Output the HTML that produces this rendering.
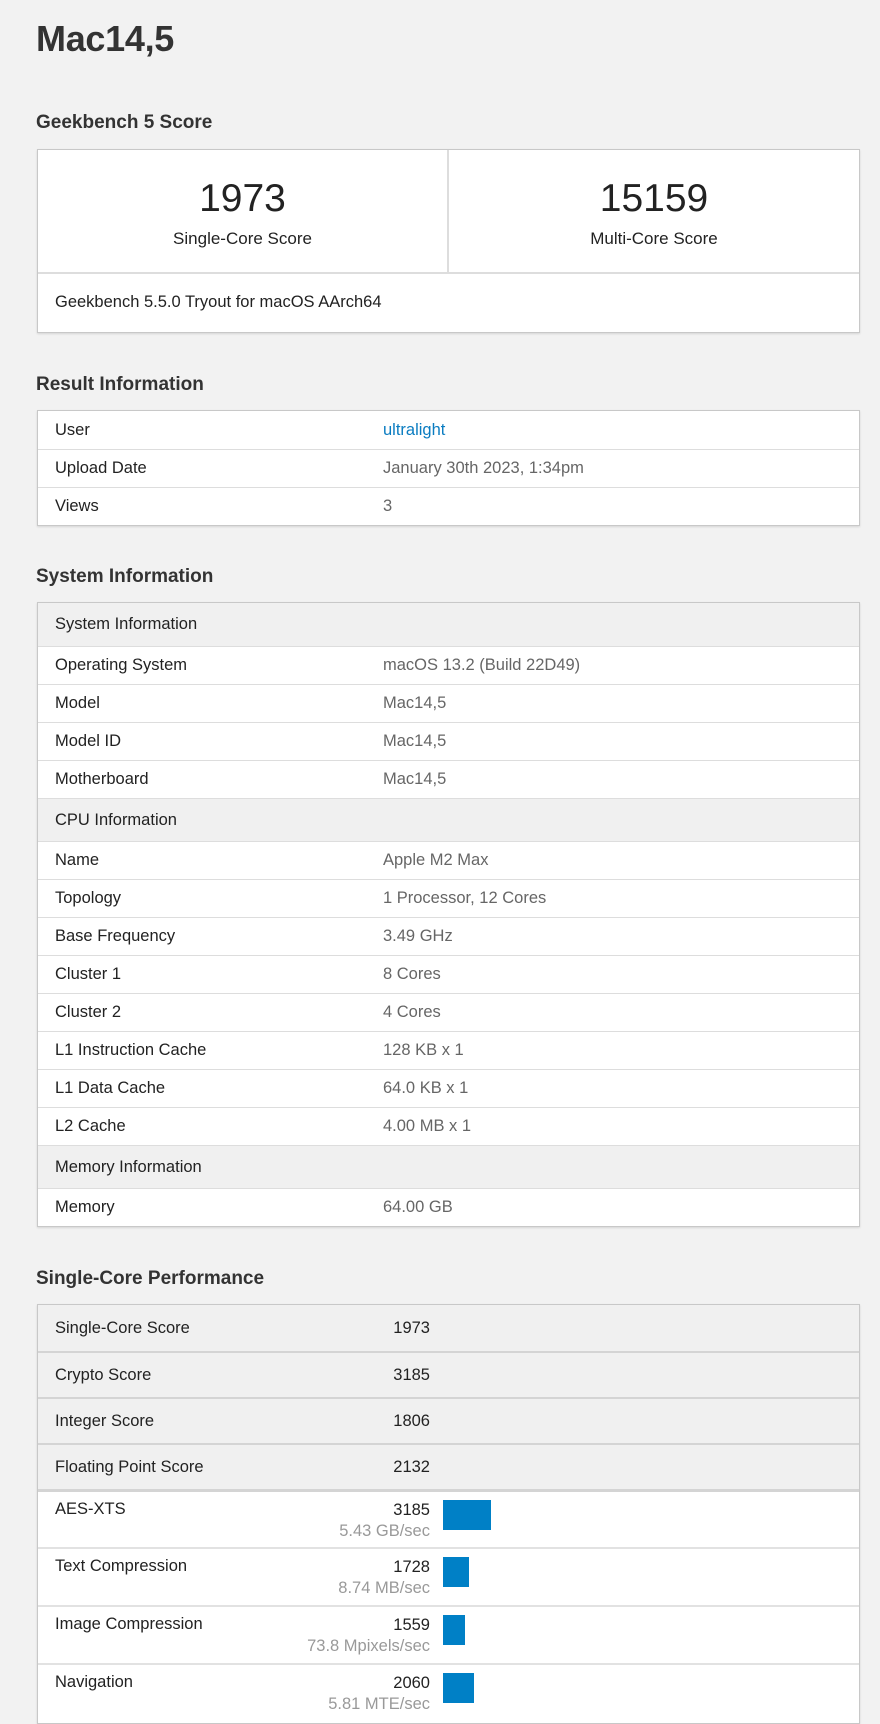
<!DOCTYPE html>
<html><head><meta charset="utf-8"><style>
*{box-sizing:border-box;margin:0;padding:0}
body{width:880px;height:1700px;overflow:hidden;background:#f2f2f2;font-family:"Liberation Sans",Arial,sans-serif;color:#222;position:relative}
h1{position:absolute;left:36px;top:18px;font-size:36px;font-weight:bold;color:#333;letter-spacing:-0.3px}
h2{position:absolute;left:36px;font-size:19px;font-weight:bold;color:#333}
.box{position:absolute;left:37px;width:823px;background:#fff;border:1px solid #c8c8c8;box-shadow:0 1px 2px rgba(0,0,0,.12)}
.r{display:flex;align-items:center;height:38px;border-top:1px solid #ddd;font-size:16.5px}
.r:first-child{border-top:none}
.r .l{width:345px;padding-left:17px;color:#222}
.r .v{color:#666}
.h{height:43px;background:#f0f0f0}
.s{height:46px;background:#f0f0f0;border-top:2px solid #d4d4d4}
.s .l{width:300px}
.s .n{width:92px;text-align:right;color:#222}
.b{display:flex;height:58px;border-top:2px solid #e2e2e2;font-size:16.5px}
.b .l{width:300px;padding:8px 0 0 17px;white-space:nowrap}
.b .n{width:92px;text-align:right;padding-top:8px;line-height:21px;white-space:nowrap;direction:rtl}
.b .n span{color:#999}
.bar{margin-left:13px;margin-top:8px;height:30px;background:#0080c6}
</style></head><body>
<h1>Mac14,5</h1>
<h2 style="top:112px">Geekbench 5 Score</h2>
<div class="box" style="top:149px;height:184px">
 <div style="display:flex;height:124px;border-bottom:2px solid #ddd">
  <div style="width:411px;border-right:2px solid #ddd;text-align:center">
   <div style="font-size:39px;margin-top:27px;color:#222">1973</div>
   <div style="font-size:17px;margin-top:8px">Single-Core Score</div></div>
  <div style="flex:1;text-align:center">
   <div style="font-size:39px;margin-top:27px;color:#222">15159</div>
   <div style="font-size:17px;margin-top:8px">Multi-Core Score</div></div>
 </div>
 <div style="font-size:16.5px;padding:19px 0 0 17px">Geekbench 5.5.0 Tryout for macOS AArch64</div>
</div>
<h2 style="top:374px">Result Information</h2>
<div class="box" style="top:410px">
 <div class="r"><div class="l">User</div><div class="v" style="color:#0a7cc1">ultralight</div></div>
 <div class="r"><div class="l">Upload Date</div><div class="v">January 30th 2023, 1:34pm</div></div>
 <div class="r"><div class="l">Views</div><div class="v">3</div></div>
</div>
<h2 style="top:566px">System Information</h2>
<div class="box" style="top:602px">
 <div class="r h"><div class="l">System Information</div></div>
 <div class="r"><div class="l">Operating System</div><div class="v">macOS 13.2 (Build 22D49)</div></div>
 <div class="r"><div class="l">Model</div><div class="v">Mac14,5</div></div>
 <div class="r"><div class="l">Model ID</div><div class="v">Mac14,5</div></div>
 <div class="r"><div class="l">Motherboard</div><div class="v">Mac14,5</div></div>
 <div class="r h"><div class="l">CPU Information</div></div>
 <div class="r"><div class="l">Name</div><div class="v">Apple M2 Max</div></div>
 <div class="r"><div class="l">Topology</div><div class="v">1 Processor, 12 Cores</div></div>
 <div class="r"><div class="l">Base Frequency</div><div class="v">3.49 GHz</div></div>
 <div class="r"><div class="l">Cluster 1</div><div class="v">8 Cores</div></div>
 <div class="r"><div class="l">Cluster 2</div><div class="v">4 Cores</div></div>
 <div class="r"><div class="l">L1 Instruction Cache</div><div class="v">128 KB x 1</div></div>
 <div class="r"><div class="l">L1 Data Cache</div><div class="v">64.0 KB x 1</div></div>
 <div class="r"><div class="l">L2 Cache</div><div class="v">4.00 MB x 1</div></div>
 <div class="r h"><div class="l">Memory Information</div></div>
 <div class="r"><div class="l">Memory</div><div class="v">64.00 GB</div></div>
</div>
<h2 style="top:1268px">Single-Core Performance</h2>
<div class="box" style="top:1304px;height:420px">
 <div class="r s" style="border-top:none"><div class="l">Single-Core Score</div><div class="n">1973</div></div>
 <div class="r s"><div class="l">Crypto Score</div><div class="n">3185</div></div>
 <div class="r s"><div class="l">Integer Score</div><div class="n">1806</div></div>
 <div class="r s"><div class="l">Floating Point Score</div><div class="n">2132</div></div>
 <div class="b" style="border-top-color:#d4d4d4;border-top-width:3px"><div class="l">AES-XTS</div><div class="n"><bdi>3185</bdi><br><span><bdi>5.43 GB/sec</bdi></span></div><div class="bar" style="width:48px"></div></div>
 <div class="b"><div class="l">Text Compression</div><div class="n"><bdi>1728</bdi><br><span><bdi>8.74 MB/sec</bdi></span></div><div class="bar" style="width:26px"></div></div>
 <div class="b"><div class="l">Image Compression</div><div class="n"><bdi>1559</bdi><br><span><bdi>73.8 Mpixels/sec</bdi></span></div><div class="bar" style="width:22px"></div></div>
 <div class="b"><div class="l">Navigation</div><div class="n"><bdi>2060</bdi><br><span><bdi>5.81 MTE/sec</bdi></span></div><div class="bar" style="width:31px"></div></div>
</div>
</body></html>
